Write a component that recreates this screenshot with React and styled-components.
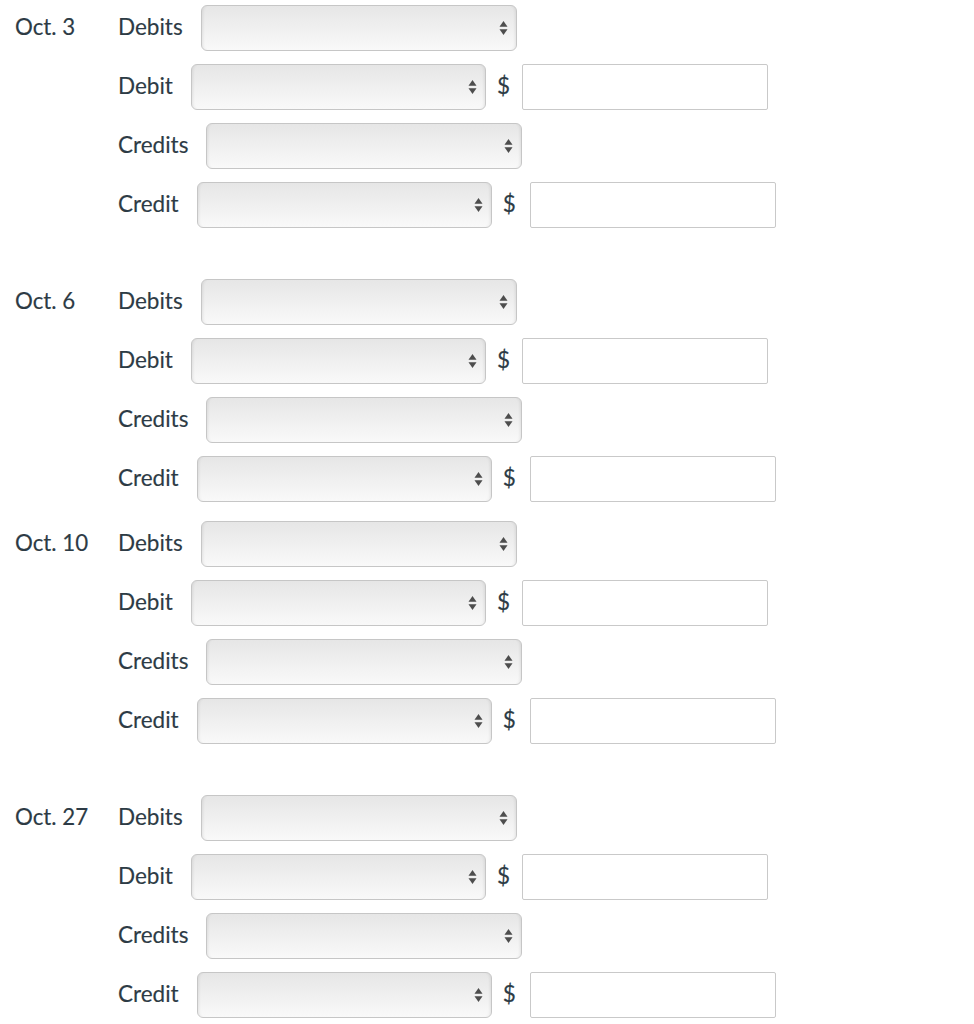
import React from "react";
import styled, { createGlobalStyle } from "styled-components";

const GlobalStyle = createGlobalStyle`
  body {
    margin: 0;
    background: #fff;
    font-family: Lato, "Open Sans", sans-serif;
    color: #2d3b45;
  }
`;

const Page = styled.div`
  display: flex;
  flex-direction: column;
  padding-top: 5px;
`;

const Group = styled.div`
  display: flex;
  align-items: flex-start;
  margin-top: ${({ $gap }) => $gap}px;
`;

const DateLabel = styled.div`
  width: 118px;
  padding-left: 15px;
  height: 46px;
  padding-bottom: 4px;
  box-sizing: border-box;
  display: flex;
  align-items: center;
  font-size: 22.3px;
  -webkit-text-stroke: 0.15px #2d3b45;
  flex-shrink: 0;
`;

const Rows = styled.div`
  display: flex;
  flex-direction: column;
  gap: 13px;
`;

const Row = styled.div`
  display: flex;
  align-items: center;
  height: 46px;
`;

const Label = styled.span`
  font-size: 22.5px;
  -webkit-text-stroke: 0.15px #2d3b45;
  margin-right: 18px;
  padding-bottom: 4px;
`;

const SelectWrap = styled.div`
  position: relative;
  width: ${({ $width }) => $width}px;
  height: 46px;
`;

const Select = styled.select`
  appearance: none;
  -webkit-appearance: none;
  width: 100%;
  height: 100%;
  box-sizing: border-box;
  border: 1px solid #c6c6c6;
  border-radius: 6px;
  background: linear-gradient(#e6e6e6, #f9f9f9);
  box-shadow: inset 3px 0 3px -2px rgba(0, 0, 0, 0.08),
    inset -3px 0 3px -2px rgba(0, 0, 0, 0.08);
  font-family: inherit;
  font-size: 18px;
  outline: none;
`;

const Arrows = styled.svg`
  position: absolute;
  right: 9px;
  top: 50%;
  transform: translateY(-50%);
  pointer-events: none;
`;

const Dollar = styled.span`
  font-size: 22.5px;
  -webkit-text-stroke: 0.15px #2d3b45;
  margin: 0 ${({ $right }) => $right}px 0 11px;
  padding-bottom: 4px;
`;

const Amount = styled.input`
  width: 246px;
  height: 46px;
  box-sizing: border-box;
  border: 1px solid #c9c9c9;
  border-radius: 2px;
  background: #fff;
  font-family: inherit;
  font-size: 18px;
  padding: 0 8px;
  outline: none;
`;

const Dropdown = ({ width }) => (
  <SelectWrap $width={width}>
    <Select defaultValue="">
      <option value=""></option>
    </Select>
    <Arrows width="9" height="16" viewBox="0 0 9 16">
      <path d="M4.5 1 L8.5 6.8 L0.5 6.8 Z" fill="#4d4d4d" />
      <path d="M4.5 15 L8.5 9.2 L0.5 9.2 Z" fill="#4d4d4d" />
    </Arrows>
  </SelectWrap>
);

const entries = [
  { date: "Oct. 3", gap: 0 },
  { date: "Oct. 6", gap: 51 },
  { date: "Oct. 10", gap: 19 },
  { date: "Oct. 27", gap: 51 },
];

const rowDefs = [
  { label: "Debits", width: 316, amount: false },
  { label: "Debit", width: 295, amount: true, gap: 12 },
  { label: "Credits", width: 316, amount: false },
  { label: "Credit", width: 295, amount: true, gap: 14 },
];

export default function App() {
  return (
    <>
      <GlobalStyle />
      <Page>
        {entries.map((entry) => (
          <Group key={entry.date} $gap={entry.gap}>
            <DateLabel>{entry.date}</DateLabel>
            <Rows>
              {rowDefs.map((row) => (
                <Row key={row.label}>
                  <Label>{row.label}</Label>
                  <Dropdown width={row.width} />
                  {row.amount && (
                    <>
                      <Dollar $right={row.gap}>$</Dollar>
                      <Amount type="text" />
                    </>
                  )}
                </Row>
              ))}
            </Rows>
          </Group>
        ))}
      </Page>
    </>
  );
}
